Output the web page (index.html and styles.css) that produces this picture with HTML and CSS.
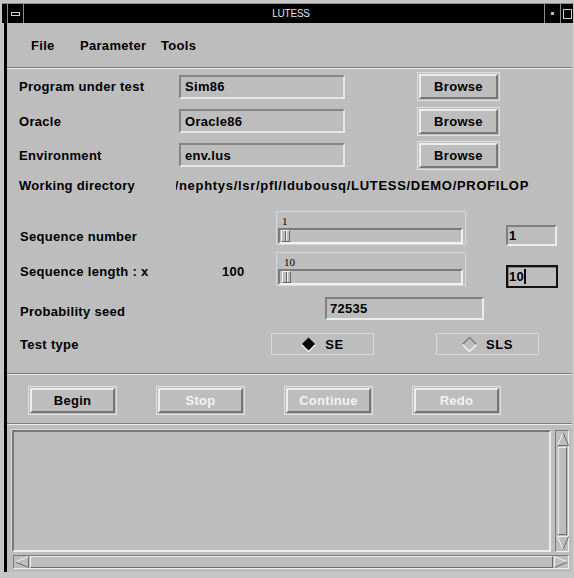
FILE: index.html
```html
<!DOCTYPE html>
<html>
<head>
<meta charset="utf-8">
<title>LUTESS</title>
<link rel="stylesheet" href="styles.css">
</head>
<body>
<div class="titlebar">
  <div class="tb-lead"></div>
  <div class="tb-box tb-menu"><span class="tb-dash"></span></div>
  <div class="tb-title">LUTESS</div>
  <div class="tb-box tb-min"><span class="tb-dot"></span></div>
  <div class="tb-box tb-max"><span class="tb-sq"></span></div>
</div>

<div class="client">
  <nav class="menubar">
    <span>File</span>
    <span>Parameter</span>
    <span>Tools</span>
  </nav>
  <div class="sep"></div>

  <section class="files">
    <div class="frow r1">
      <span class="lbl">Program under test</span>
      <div class="field">Sim86</div>
      <span></span>
      <div class="ring"><div class="btn">Browse</div></div>
    </div>
    <div class="frow r2">
      <span class="lbl">Oracle</span>
      <div class="field">Oracle86</div>
      <span></span>
      <div class="ring"><div class="btn">Browse</div></div>
    </div>
    <div class="frow r3">
      <span class="lbl">Environment</span>
      <div class="field">env.lus</div>
      <span></span>
      <div class="ring"><div class="btn">Browse</div></div>
    </div>
    <div class="frow r4">
      <span class="lbl">Working directory</span>
      <div class="path"><span>n/nephtys/lsr/pfl/ldubousq/LUTESS/DEMO/PROFILOP</span></div>
    </div>
  </section>

  <section class="params">
    <div class="prow r5">
      <span class="lbl">Sequence number</span>
      <span></span>
      <div class="slider">
        <div class="slider-val">1</div>
        <div class="trough"><div class="thumb"></div></div>
      </div>
      <span></span>
      <div class="vfield">1</div>
    </div>
    <div class="prow r6">
      <span class="lbl">Sequence length : x</span>
      <span class="lbl">100</span>
      <div class="slider">
        <div class="slider-val shift">10</div>
        <div class="trough"><div class="thumb nudge"></div></div>
      </div>
      <span></span>
      <div class="vfield focus">10<i class="caret"></i></div>
    </div>
    <div class="prow r7">
      <span class="lbl">Probability seed</span>
      <div class="vfield seed">72535</div>
    </div>
    <div class="prow r8">
      <span class="lbl">Test type</span>
      <div class="toggle">
        <svg width="15" height="15" viewBox="0 0 15 15">
          <polygon points="7.5,0.5 14.5,7.5 7.5,14.5 0.5,7.5" fill="#000"/>
          <polyline points="0.5,7.5 7.5,14.5 14.5,7.5" fill="none" stroke="#f4f4f4" stroke-width="1.4"/>
        </svg>
        <span>SE</span>
      </div>
      <span></span>
      <div class="toggle">
        <svg width="15" height="15" viewBox="0 0 15 15">
          <polyline points="0.5,7.5 7.5,0.5 14.5,7.5" fill="none" stroke="#7a7a7a" stroke-width="1.4"/>
          <polyline points="0.5,7.5 7.5,14.5 14.5,7.5" fill="none" stroke="#f4f4f4" stroke-width="1.4"/>
        </svg>
        <span>SLS</span>
      </div>
    </div>
  </section>
  <div class="sep"></div>

  <div class="actions">
    <div class="ring"><div class="btn">Begin</div></div>
    <div class="ring"><div class="btn off">Stop</div></div>
    <div class="ring"><div class="btn off">Continue</div></div>
    <div class="ring"><div class="btn off">Redo</div></div>
  </div>
  <div class="sep"></div>

  <div class="scrolled">
    <div class="textarea"></div>
    <div class="vscroll">
      <svg class="arrow" width="12" height="14" viewBox="0 0 12 14">
        <polyline points="0.5,13.5 6,0.5" fill="none" stroke="#f2f2f2"/>
        <polyline points="6,0.5 11.5,13.5 0.5,13.5" fill="none" stroke="#6c6c6c"/>
      </svg>
      <div class="sthumb"></div>
      <svg class="arrow" width="12" height="14" viewBox="0 0 12 14">
        <polyline points="11.5,0.5 0.5,0.5 6,13.5" fill="none" stroke="#f2f2f2"/>
        <polyline points="6,13.5 11.5,0.5" fill="none" stroke="#6c6c6c"/>
      </svg>
    </div>
    <div class="hscroll">
      <svg class="arrow" width="14" height="12" viewBox="0 0 14 12">
        <polyline points="13.5,0.5 0.5,6" fill="none" stroke="#f2f2f2"/>
        <polyline points="0.5,6 13.5,11.5 13.5,0.5" fill="none" stroke="#6c6c6c"/>
      </svg>
      <div class="sthumb"></div>
      <svg class="arrow" width="14" height="12" viewBox="0 0 14 12">
        <polyline points="0.5,11.5 0.5,0.5 13.5,6" fill="none" stroke="#f2f2f2"/>
        <polyline points="13.5,6 0.5,11.5" fill="none" stroke="#6c6c6c"/>
      </svg>
    </div>
  </div>
</div>
</body>
</html>
```

FILE: styles.css
```css
* { box-sizing: border-box; }

html, body { margin: 0; }

body {
  width: 574px;
  height: 578px;
  overflow: hidden;
  background: #c6c6c6;
  font-family: "Liberation Sans", Arial, sans-serif;
  font-weight: bold;
  font-size: 13px;
  letter-spacing: 0.3px;
  color: #000;
}

/* window manager title bar */
.titlebar {
  display: flex;
  height: 20px;
  margin: 3px 1px 0 2px;
  background: #000;
  border-top: 1px solid #8e8e8e;
}
.tb-lead { width: 5px; }
.tb-box {
  display: flex;
  align-items: center;
  justify-content: center;
  border-left: 1px solid #8e8e8e;
}
.tb-menu { width: 17px; border-right: 1px solid #8e8e8e; }
.tb-min { width: 16px; }
.tb-max { width: 13px; }
.tb-dash { width: 9px; height: 4px; border: 1px solid #cfcfcf; }
.tb-dot { width: 3px; height: 3px; background: #bdbdbd; }
.tb-sq { width: 9px; height: 10px; border: 1px solid #d0d0d0; }
.tb-title {
  flex: 1;
  text-align: center;
  color: #e2e2e2;
  font-weight: normal;
  font-size: 10px;
  letter-spacing: -0.2px;
  line-height: 19px;
  padding-left: 14px;
}

/* application area */
.client {
  margin-left: 4px;
  width: 568px;
  height: 549px;
  border-left: 3px solid #000;
  background: #bdbdbd;
  display: flex;
  flex-direction: column;
}

.menubar {
  flex-shrink: 0;
  height: 44px;
  padding-left: 24px;
  display: grid;
  grid-template-columns: 49px 81px auto;
  align-items: center;
}

.sep {
  flex-shrink: 0;
  height: 2px;
  border-top: 1px solid #7c7c7c;
  border-bottom: 1px solid #ebebeb;
}

.lbl { line-height: 15px; white-space: nowrap; }

/* file selection rows */
.frow {
  display: grid;
  grid-template-columns: 160px 166px 72px 83px;
  padding-left: 12px;
  align-items: center;
}
.r1 { height: 35px; }
.r2, .r3 { height: 34px; }
.r4 { height: 26px; grid-template-columns: 157px 353px; }

.field {
  height: 24px;
  border: 2px solid;
  border-color: #858585 #e6e6e6 #e6e6e6 #858585;
  padding-left: 4px;
  display: flex;
  align-items: center;
}

.ring {
  height: 29px;
  border: 1px solid #e0e0e0;
  padding: 1px;
}
.btn {
  height: 25px;
  border: 2px solid;
  border-color: #ededed #777 #777 #ededed;
  display: flex;
  align-items: center;
  justify-content: center;
}
.btn.off { color: #f2f2f2; }

.path {
  display: flex;
  justify-content: flex-end;
  overflow: hidden;
  white-space: nowrap;
  letter-spacing: 0.7px;
}

/* parameter rows */
.params { padding-top: 13px; }
.prow {
  display: grid;
  padding-left: 13px;
  align-items: start;
}
.r5 { height: 41px; grid-template-columns: 202px 54px 190px 40px 51px; }
.r5 .lbl { margin-top: 18px; }
.r6 { height: 45px; grid-template-columns: 202px 54px 190px 40px 52px; }
.r6 .lbl { margin-top: 12px; }
.r7 { height: 36px; grid-template-columns: 305px 159px; }
.r7 .lbl { margin-top: 7px; }
.r8 { height: 40px; grid-template-columns: 251px 103px 62px 103px; }
.r8 .lbl { margin-top: 4px; }

.slider {
  height: 34px;
  border: 1px solid #d8d8d8;
  padding: 1px 2px 1px 1px;
  display: flex;
  flex-direction: column;
}
.slider-val {
  height: 15px;
  padding: 1px 0 0 4px;
  font-family: "Liberation Serif", serif;
  font-weight: normal;
  font-size: 11px;
  line-height: 14px;
  letter-spacing: 0;
}
.slider-val.shift { padding-left: 6px; }
.trough {
  height: 16px;
  border: 2px solid;
  border-color: #7a7a7a #f2f2f2 #f2f2f2 #7a7a7a;
}
.thumb {
  position: relative;
  width: 9px;
  height: 12px;
  margin-left: 1px;
  border: 1px solid;
  border-color: #f0f0f0 #666 #666 #f0f0f0;
}
.thumb.nudge { margin-left: 2px; }
.thumb::after {
  content: "";
  position: absolute;
  left: 3px;
  top: 0;
  width: 1px;
  height: 10px;
  background: #666;
  box-shadow: 1px 0 0 #f0f0f0;
}

.vfield {
  height: 21px;
  border: 2px solid;
  border-color: #7f7f7f #ececec #ececec #7f7f7f;
  padding-left: 1px;
  display: flex;
  align-items: center;
}
.r5 .vfield { margin-top: 14px; }
.r6 .vfield { margin-top: 13px; height: 23px; }
.vfield.focus {
  border-color: #111;
  box-shadow: inset 1px 1px 0 #7f7f7f;
}
.vfield.seed { height: 23px; padding-left: 3px; }
.caret {
  display: inline-block;
  width: 2px;
  height: 15px;
  background: #000;
}

.toggle {
  height: 22px;
  border: 1px solid #d6d6d6;
  display: flex;
  align-items: center;
  justify-content: center;
  gap: 9px;
}
.toggle span { letter-spacing: 0.6px; }

/* command buttons */
.actions {
  flex-shrink: 0;
  height: 48px;
  padding: 11px 0 0 21px;
  display: grid;
  grid-template-columns: repeat(4, 89px);
  column-gap: 39px;
  align-items: start;
}

/* output window with scrollbars */
.scrolled {
  flex: 1;
  padding: 5px 0 0 5px;
  display: grid;
  grid-template-columns: 539px 4px 14px;
  grid-template-rows: 122px 3px 14px;
}
.textarea {
  grid-column: 1;
  grid-row: 1;
  border: 2px solid;
  border-color: #777 #ececec #ececec #777;
  box-shadow: -1px -1px 0 #dcdcdc;
}
.vscroll {
  grid-column: 3;
  grid-row: 1;
  border: 1px solid;
  border-color: #7a7a7a #efefef #efefef #7a7a7a;
  padding: 1px 0 1px 1px;
  display: flex;
  flex-direction: column;
}
.hscroll {
  grid-column: 1 / 4;
  grid-row: 3;
  margin-left: 1px;
  border: 1px solid;
  border-color: #7a7a7a #efefef #efefef #7a7a7a;
  padding: 0 0 0 1px;
  display: flex;
  align-items: center;
}
.arrow { display: block; flex-shrink: 0; }
.sthumb {
  flex: 1;
  border: 1px solid;
  border-color: #efefef #6c6c6c #6c6c6c #efefef;
  margin: 1px;
}
.hscroll .sthumb { height: 12px; }
```
